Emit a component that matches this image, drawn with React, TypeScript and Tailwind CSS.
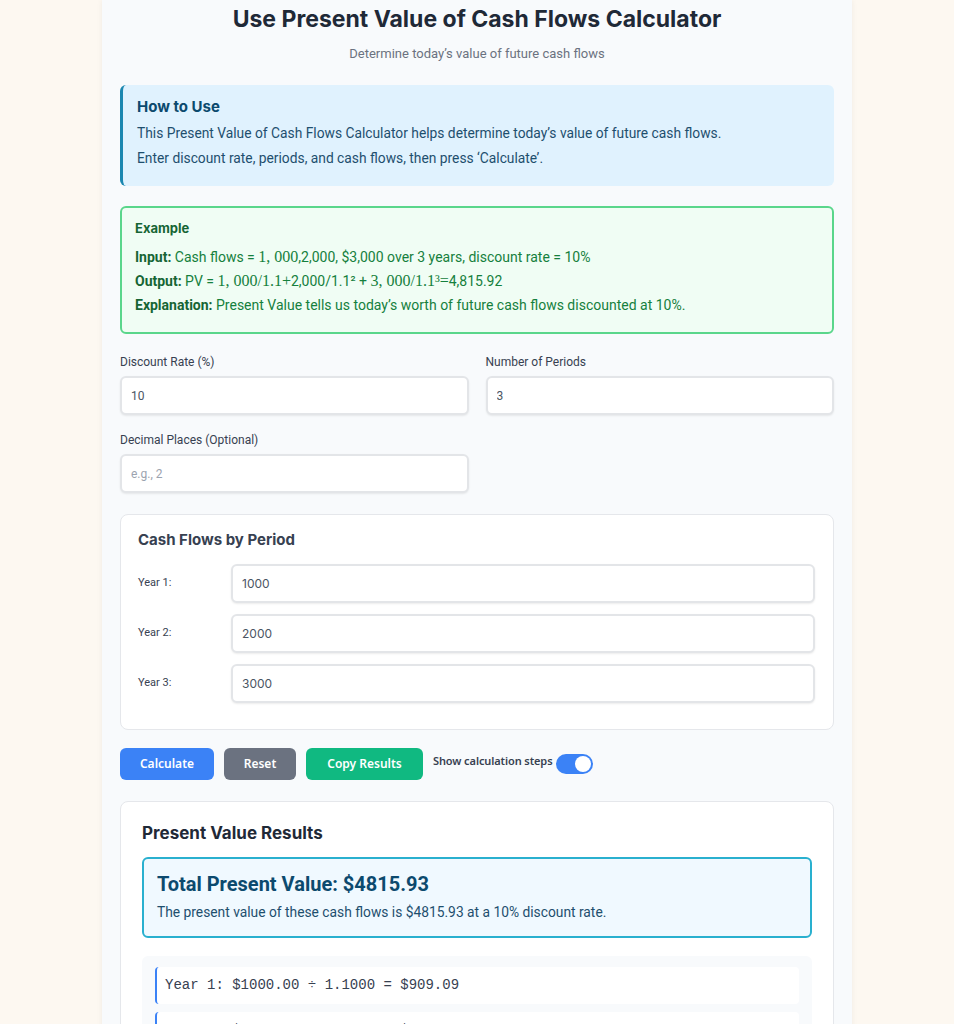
import { useState } from "react";

const cond = "font-['Roboto','Noto_Sans',sans-serif]";
const head = "font-['Inter','Noto_Sans',sans-serif]";
const btn = "font-['Noto_Sans','Open_Sans',sans-serif]";
const math = "font-['Liberation_Serif','DejaVu_Serif',serif] text-[16px]";
const mono = "font-['Liberation_Mono','DejaVu_Sans_Mono',monospace]";

const flows = ["1000", "2000", "3000"];
const steps = [
  "Year 1: $1000.00 ÷ 1.1000 = $909.09",
  "Year 2: $2000.00 ÷ 1.2100 = $1652.89",
  "Year 3: $3000.00 ÷ 1.3310 = $2253.94",
];

export default function App() {
  const [showSteps, setShowSteps] = useState(true);

  return (
    <div className="min-h-screen bg-[#fdf8f1]">
      <div className="mx-auto w-[750px] bg-[#f8fafc] px-[18px] pt-[5px] pb-10 shadow-[0_0_6px_rgba(0,0,0,0.06)]">
        {/* Header */}
        <h1
          className={`text-center text-[23px] leading-7 font-bold text-[#1f2937] ${head}`}
        >
          Use Present Value of Cash Flows Calculator
        </h1>
        <p
          className={`mt-[11px] text-center text-[13px] leading-5 text-[#6b7280] ${cond}`}
        >
          Determine today’s value of future cash flows
        </p>

        {/* How to use */}
        <div className="mt-[21px] rounded-md border-l-[3px] border-[#1b87b0] bg-[#e0f2fe] px-[14px] pt-[14px] pb-[15px]">
          <h3 className={`text-[15px] leading-4 font-bold text-[#0c4a6e] ${head}`}>
            How to Use
          </h3>
          <div className={`mt-[6px] text-[13.8px] leading-[25px] text-[#1e4f6e] ${cond}`}>
            <p>
              This Present Value of Cash Flows Calculator helps determine
              today’s value of future cash flows.
            </p>
            <p>
              Enter discount rate, periods, and cash flows, then press
              ‘Calculate’.
            </p>
          </div>
        </div>

        {/* Example */}
        <div className="mt-5 rounded-md border-2 border-[#5ad68b] bg-[#f0fdf4] px-[13px] pt-3 pb-[15px] text-[#15803d]">
          <h4 className={`text-[13px] leading-4 font-bold text-[#166534] ${head}`}>
            Example
          </h4>
          <div className={`mt-[9px] text-[14px] leading-6 ${cond}`}>
            <p>
              <b className="text-[#166534]">Input:</b> Cash flows ={" "}
              <span className={math}>1, 000</span>
              ,2,000, $3,000 over 3 years, discount rate = 10%
            </p>
            <p>
              <b className="text-[#166534]">Output:</b> PV ={" "}
              <span className={math}>1, 000/1.1+</span>
              2,000/1.1² + <span className={math}>3, 000/1.1³=</span>
              4,815.92
            </p>
            <p>
              <b className="text-[#166534]">Explanation:</b> Present Value
              tells us today’s worth of future cash flows discounted at 10%.
            </p>
          </div>
        </div>

        {/* Inputs */}
        <div className="mt-5 grid grid-cols-2 gap-x-[17px] gap-y-[17px]">
          <Field label="Discount Rate (%)" value="10" />
          <Field label="Number of Periods" value="3" />
          <Field label="Decimal Places (Optional)" placeholder="e.g., 2" />
        </div>

        {/* Cash flows */}
        <div className="mt-[21px] rounded-lg border border-[#e5e7eb] bg-white pt-[15px] pr-[18px] pb-[26px] pl-[17px]">
          <h3 className={`text-[15px] leading-5 font-bold text-[#374151] ${head}`}>
            Cash Flows by Period
          </h3>
          <div className="mt-[14px] flex flex-col gap-[11px]">
            {flows.map((v, i) => (
              <div key={i} className="flex items-center">
                <label className={`w-[93px] shrink-0 text-[11px] text-[#374151] ${cond}`}>
                  Year {i + 1}:
                </label>
                <input
                  defaultValue={v}
                  className={`h-[39px] flex-1 rounded-md border-2 border-[#e3e5e8] bg-white px-[9px] text-[12px] text-[#4b5563] shadow-[0_1px_2px_rgba(0,0,0,0.08)] outline-none ${head}`}
                />
              </div>
            ))}
          </div>
        </div>

        {/* Actions */}
        <div className="mt-[18px] flex items-center gap-[10px]">
          <button
            className={`h-8 w-[94px] rounded-md bg-[#3b82f6] text-[12px] font-semibold text-white ${btn}`}
          >
            Calculate
          </button>
          <button
            className={`h-8 w-[72px] rounded-md bg-[#6b7280] text-[12px] font-semibold text-white ${btn}`}
          >
            Reset
          </button>
          <button
            className={`h-8 w-[117px] rounded-md bg-[#10b981] text-[12px] font-semibold text-white ${btn}`}
          >
            Copy Results
          </button>
          <div className="flex items-center gap-[4px]">
            <span
              className={`-mt-[5px] text-[11px] font-semibold tracking-[-0.1px] text-[#374151] ${btn}`}
            >
              Show calculation steps
            </span>
            <button
              onClick={() => setShowSteps(!showSteps)}
              className={`relative h-5 w-[37px] rounded-full ${showSteps ? "bg-[#3b82f6]" : "bg-gray-300"}`}
            >
              <span
                className={`absolute top-[2px] h-4 w-4 rounded-full bg-white ${showSteps ? "right-[2px]" : "left-[2px]"}`}
              />
            </button>
          </div>
        </div>

        {/* Results */}
        <div className="mt-[21px] rounded-lg border border-[#e5e7eb] bg-white px-[21px] pt-5 pb-6">
          <h3 className={`text-[17px] leading-[22px] font-bold text-[#1f2937] ${head}`}>
            Present Value Results
          </h3>
          <div className="mt-[13px] rounded-md border-2 border-[#29b0cf] bg-[#f0f9ff] px-[13px] pt-3 pb-[14px]">
            <h2 className={`text-[20px] leading-[26px] font-bold text-[#0c4a6e] ${cond}`}>
              Total Present Value: $4815.93
            </h2>
            <p className={`mt-[5px] text-[13.8px] leading-5 text-[#1e4f6e] ${cond}`}>
              The present value of these cash flows is $4815.93 at a 10%
              discount rate.
            </p>
          </div>

          {showSteps && (
            <div className="mt-[18px] flex flex-col gap-2 rounded-md bg-[#f8fafc] px-[13px] py-[11px]">
              {steps.map((s) => (
                <div
                  key={s}
                  className={`flex h-[37px] items-center rounded-sm border-l-2 border-[#3b82f6] bg-white px-2 text-[14px] text-[#374151] ${mono}`}
                >
                  {s}
                </div>
              ))}
            </div>
          )}
        </div>
      </div>
    </div>
  );
}

function Field({
  label,
  value,
  placeholder,
}: {
  label: string;
  value?: string;
  placeholder?: string;
}) {
  return (
    <div>
      <label className={`block text-[12px] leading-4 text-[#374151] ${cond}`}>
        {label}
      </label>
      <input
        defaultValue={value}
        placeholder={placeholder}
        className={`mt-[6px] h-[39px] w-full rounded-md border-2 border-[#e3e5e8] bg-white px-[9px] text-[12px] text-[#4b5563] shadow-[0_1px_2px_rgba(0,0,0,0.08)] outline-none placeholder:text-[#9ca3af] ${cond}`}
      />
    </div>
  );
}
